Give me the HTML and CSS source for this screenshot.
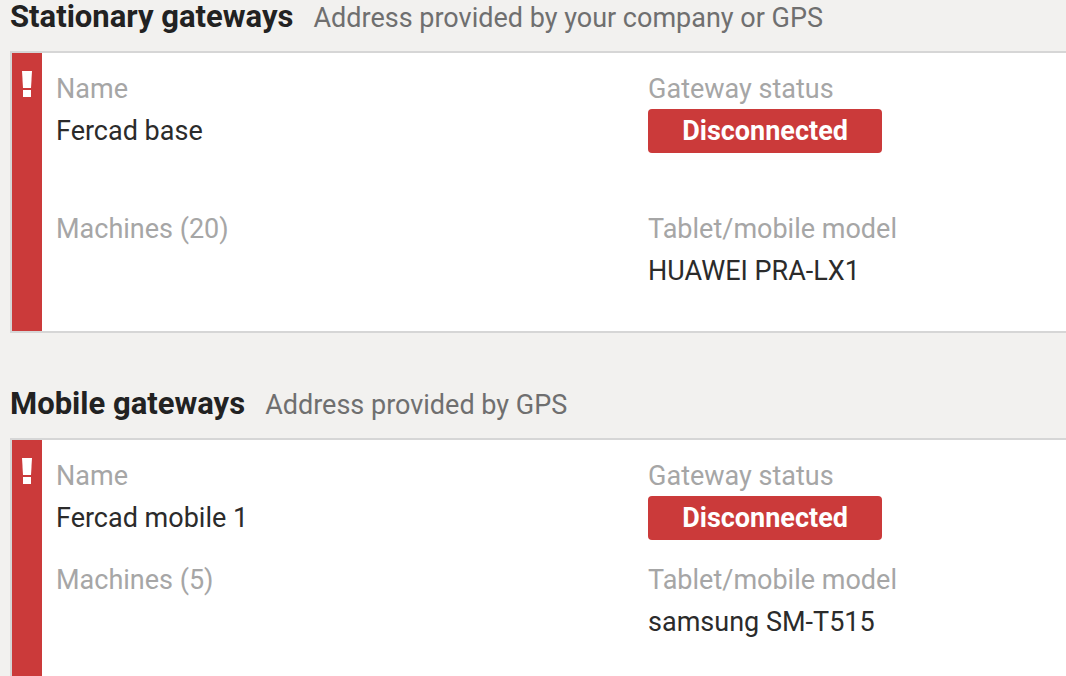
FILE: index.html
```html
<!DOCTYPE html>
<html lang="en">
<head>
<meta charset="utf-8">
<title>Gateways</title>
<link rel="stylesheet" href="styles.css">
</head>
<body>
<main class="page">
  <section class="group">
    <header class="group-header">
      <h2 class="group-title">Stationary gateways</h2>
      <p class="group-note">Address provided by your company or GPS</p>
    </header>
    <article class="card">
      <div class="alert-bar">
        <svg class="alert-icon" viewBox="0 0 10 26" role="img" aria-label="Alert"><path d="M0 0h10l-1 17H1z"/><rect x="1" y="19" width="8" height="7"/></svg>
      </div>
      <dl class="fields fields-roomy">
        <div class="field"><dt>Name</dt><dd>Fercad base</dd></div>
        <div class="field"><dt>Gateway status</dt><dd class="status">Disconnected</dd></div>
        <div class="field"><dt>Machines (20)</dt></div>
        <div class="field"><dt>Tablet/mobile model</dt><dd>HUAWEI PRA-LX1</dd></div>
      </dl>
    </article>
  </section>
  <section class="group">
    <header class="group-header">
      <h2 class="group-title">Mobile gateways</h2>
      <p class="group-note">Address provided by GPS</p>
    </header>
    <article class="card">
      <div class="alert-bar">
        <svg class="alert-icon" viewBox="0 0 10 26" role="img" aria-label="Alert"><path d="M0 0h10l-1 17H1z"/><rect x="1" y="19" width="8" height="7"/></svg>
      </div>
      <dl class="fields">
        <div class="field"><dt>Name</dt><dd>Fercad mobile 1</dd></div>
        <div class="field"><dt>Gateway status</dt><dd class="status">Disconnected</dd></div>
        <div class="field"><dt>Machines (5)</dt></div>
        <div class="field"><dt>Tablet/mobile model</dt><dd>samsung SM-T515</dd></div>
      </dl>
    </article>
  </section>
</main>
</body>
</html>
```
FILE: styles.css
```css
* { box-sizing: border-box; }
body {
  margin: 0;
  background: #f2f1ef;
  color: #2b2b2b;
  font-family: Roboto, "Liberation Sans", sans-serif;
  font-size: 27px;
}
.page {
  display: flex;
  flex-direction: column;
  gap: 54px;
  padding-left: 10px;
}
.group-header {
  display: flex;
  align-items: baseline;
  gap: 20px;
  padding-bottom: 16px;
  line-height: 33px;
}
.group-title {
  margin: 0;
  color: #222;
  font-size: 31px;
  font-weight: 700;
}
.group-note { margin: 0; color: #6f6f6f; }
.card {
  display: flex;
  border: 2px solid #d6d6d6;
  border-right: 0;
  background: #fff;
}
.alert-bar {
  flex: none;
  width: 30px;
  padding-top: 18px;
  background: #cb3a3a;
}
.alert-icon {
  display: block;
  width: 10px;
  height: 26px;
  margin: 0 auto;
  fill: #fff;
}
.fields {
  flex: 1;
  display: grid;
  grid-template-columns: 17fr 12fr;
  row-gap: 20px;
  margin: 0;
  padding: 16px 0 38px 14px;
}
.fields-roomy { row-gap: 56px; }
dt { color: #a6a6a6; line-height: 40px; }
dd { margin: 0; line-height: 44px; }
.status {
  width: 234px;
  border-radius: 4px;
  background: #cb3a3a;
  color: #fff;
  font-weight: 700;
  text-align: center;
}
```
